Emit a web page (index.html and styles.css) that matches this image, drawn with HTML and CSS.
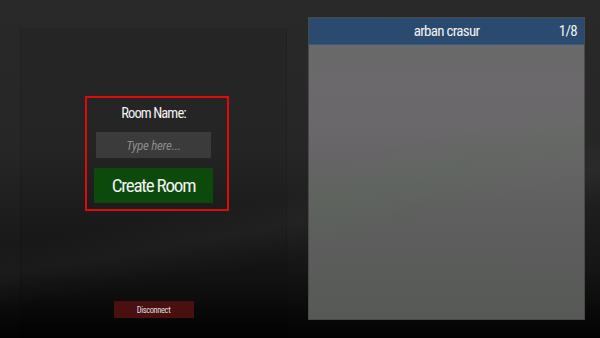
FILE: index.html
```html
<!DOCTYPE html>
<html lang="en">
<head>
    <meta charset="UTF-8">
    <meta name="viewport" content="width=device-width, initial-scale=1.0">
    <title>Lobby</title>
    <link rel="stylesheet" href="styles.css">
</head>
<body>
    <div class="lobby">
        <div class="side">
            <div class="room-form">
                <div class="form-title">Room Name:</div>
                <input class="room-input" type="text" placeholder="Type here...">
                <button class="create-btn">Create Room</button>
            </div>
            <button class="disconnect-btn">Disconnect</button>
        </div>
        <div class="room-list">
            <div class="room-row">
                <span class="room-name">arban crasur</span>
                <span class="room-count">1/8</span>
            </div>
        </div>
    </div>
</body>
</html>
```

FILE: styles.css
```css
html{
    height: 100%;
    overflow: hidden;
}
body{
    margin: 0;
    height: 100%;
    overflow: hidden;
    font-family: "Liberation Sans Narrow", "Roboto Condensed", "DejaVu Sans", sans-serif;
    font-stretch: condensed;
    color: #f2f2f2;
    background:
        linear-gradient(170deg, rgba(255,255,255,0) 55%, rgba(255,255,255,0.03) 62%, rgba(255,255,255,0) 70%),
        linear-gradient(180deg, #292929 0%, #262626 45%, #151515 80%, #020202 100%);
}
.lobby{
    display: flex;
    height: 100%;
}
.side{
    width: 267px;
    margin: 28px 0 0 20px;
    display: flex;
    flex-direction: column;
    background: rgba(0,0,0,0.05);
    border-left: 1px solid rgba(0,0,0,0.12);
    border-right: 1px solid rgba(0,0,0,0.12);
    box-sizing: border-box;
}
.room-form{
    width: 144px;
    margin: 68px 0 0 64px;
    padding: 6px 7px 6px 0;
    box-sizing: border-box;
    border: 2px solid #e00a0a;
    display: flex;
    flex-direction: column;
    align-items: center;
}
.form-title{
    height: 20px;
    line-height: 20px;
    font-size: 14.5px;
    letter-spacing: -0.9px;
    margin-bottom: 8px;
}
.room-input{
    width: 115px;
    height: 26px;
    box-sizing: border-box;
    border: none;
    outline: none;
    background: #3b3b3b;
    color: #ddd;
    font-family: inherit;
    font-stretch: condensed;
    font-size: 13px;
    letter-spacing: -0.3px;
    text-align: center;
}
.room-input::placeholder{
    color: #8a8a8a;
    font-style: italic;
}
.create-btn{
    width: 119px;
    height: 35px;
    margin-top: 10px;
    border: none;
    background: #0b4a0b;
    color: #f2f2f2;
    font-family: inherit;
    font-stretch: condensed;
    font-size: 19px;
    letter-spacing: -1.2px;
    padding: 0;
}
.disconnect-btn{
    align-self: center;
    width: 80px;
    height: 17px;
    margin: auto 0 20px 0;
    padding: 0;
    border: none;
    background: #4a0f0f;
    color: #ddd;
    font-family: inherit;
    font-stretch: condensed;
    font-size: 8.5px;
    letter-spacing: -0.4px;
}
.room-list{
    width: 277px;
    height: 303px;
    margin: 17px 0 0 21px;
    background:
        linear-gradient(165deg, rgba(0,0,0,0) 40%, rgba(90,110,90,0.25) 50%, rgba(0,0,0,0) 62%),
        linear-gradient(180deg, #6a6a6a 0%, #6b686b 35%, #5e5f5e 65%, #575957 100%);
    border: 1px solid #4a4a4a;
    box-sizing: border-box;
}
.room-row{
    height: 26px;
    background: #2b4a70;
    border-bottom: 1px solid #3c5a80;
    display: flex;
    align-items: center;
    position: relative;
    justify-content: center;
    font-size: 15px;
    letter-spacing: -0.7px;
}
.room-count{
    position: absolute;
    right: 7px;
}
```
